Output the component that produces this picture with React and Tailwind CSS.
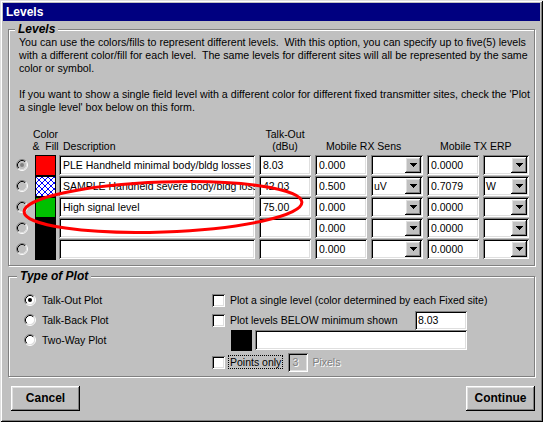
import React from "react";

const SUNKEN =
  "bg-white shadow-[inset_1px_1px_0_#808080,inset_-1px_-1px_0_#fff,inset_2px_2px_0_#000,inset_-2px_-2px_0_#dfdfdf]";
const SUNKEN_GRAY =
  "bg-[#c0c0c0] shadow-[inset_1px_1px_0_#808080,inset_-1px_-1px_0_#fff,inset_2px_2px_0_#000,inset_-2px_-2px_0_#dfdfdf]";
const RAISED =
  "bg-[#c0c0c0] shadow-[inset_-1px_-1px_0_#000,inset_1px_1px_0_#fff,inset_-2px_-2px_0_#808080,inset_2px_2px_0_#dfdfdf]";
const GROUP =
  "relative border border-[#808080] shadow-[inset_1px_1px_0_#fff,1px_1px_0_#fff]";

function Radio({ fill = "#fff", dot }) {
  return (
    <svg width="12" height="12" viewBox="0 0 12 12" className="shrink-0">
      <circle cx="6" cy="6" r="4.5" fill={fill} />
      <path d="M2.11 9.89A5.5 5.5 0 0 1 9.89 2.11" fill="none" stroke="#808080" />
      <path d="M9.89 2.11A5.5 5.5 0 0 1 2.11 9.89" fill="none" stroke="#fff" />
      <path d="M2.82 9.18A4.5 4.5 0 0 1 9.18 2.82" fill="none" stroke="#000" />
      <path d="M9.18 2.82A4.5 4.5 0 0 1 2.82 9.18" fill="none" stroke="#dfdfdf" />
      {dot && <circle cx="6" cy="6" r="2" fill={dot} />}
    </svg>
  );
}

function Arrow() {
  return (
    <svg width="7" height="4" viewBox="0 0 7 4" shapeRendering="crispEdges">
      <path d="M0 0h7v1h-1v1h-1v1h-1v1h-1v-1h-1v-1h-1v-1h-1z" fill="#000" />
    </svg>
  );
}

function Field({ className, text }) {
  return (
    <div className={`${SUNKEN} ${className} h-[20px] flex items-center pl-[4px] overflow-hidden whitespace-nowrap shrink-0`}>
      {text}
    </div>
  );
}

function Combo({ className, text }) {
  return (
    <div className={`${SUNKEN} ${className} h-[20px] flex p-[2px] shrink-0`}>
      <div className="flex-1 flex items-center pl-[1px]">{text}</div>
      <div className={`${RAISED} w-[16px] h-[16px] flex items-center justify-center`}>
        <Arrow />
      </div>
    </div>
  );
}

function Swatch({ kind }) {
  if (kind === "hatch") {
    return (
      <div className="w-[21px] h-[21px] border border-black bg-white shrink-0 overflow-hidden">
        <svg width="19" height="19" viewBox="0 0 19 19">
          <defs>
            <pattern id="hx" width="6" height="6" patternUnits="userSpaceOnUse">
              <path d="M0 0L6 6M6 0L0 6" stroke="#0000ff" strokeWidth="1" />
            </pattern>
          </defs>
          <rect width="19" height="19" fill="url(#hx)" />
        </svg>
      </div>
    );
  }
  const bg =
    kind === "red" ? "bg-[#ff0000]" : kind === "green" ? "bg-[#00c000]" : "bg-black";
  return <div className={`w-[21px] h-[21px] border border-black shrink-0 ${bg}`} />;
}

function Check() {
  return <div className={`${SUNKEN} w-[13px] h-[13px] shrink-0`} />;
}

const rows = [
  { sel: true, sw: "red", desc: "PLE Handheld minimal body/bldg losses", talk: "8.03", rx: "0.000", rxu: "", tx: "0.0000", txu: "" },
  { sw: "hatch", desc: "SAMPLE Handheld severe body/bldg losses", talk: "42.03", rx: "0.500", rxu: "uV", tx: "0.7079", txu: "W" },
  { sw: "green", desc: "High signal level", talk: "75.00", rx: "0.000", rxu: "", tx: "0.0000", txu: "" },
  { sw: "black", desc: "", talk: "", rx: "0.000", rxu: "", tx: "0.0000", txu: "" },
  { sw: "black", desc: "", talk: "", rx: "0.000", rxu: "", tx: "0.0000", txu: "" },
];

const lines = [
  "You can use the colors/fills to represent different levels.  With this option, you can specify up to five(5) levels",
  "with a different color/fill for each level.  The same levels for different sites will all be represented by the same",
  "color or symbol.",
  "",
  "If you want to show a single field level with a different color for different fixed transmitter sites, check the 'Plot",
  "a single level' box below on this form.",
];

export default function App() {
  return (
    <div className="relative w-[543px] h-[422px] bg-[#c0c0c0] p-[3px] text-[10.5px] leading-[13px] text-black font-['Liberation_Sans',Arial,sans-serif] shadow-[inset_1px_1px_0_#dfdfdf,inset_-1px_-1px_0_#000,inset_2px_2px_0_#fff,inset_-2px_-2px_0_#808080] overflow-hidden">
      <div className="h-[18px] bg-[#000080] text-white font-bold text-[12px] flex items-center pl-[3px]">
        Levels
      </div>

      <div className="px-[5px] pt-[8px]">
        {/* Levels group */}
        <div className={`${GROUP} w-[527px] h-[237px] pl-[7px] pt-[6px]`}>
          <span className="absolute left-[6px] top-[-8px] px-[3px] bg-[#c0c0c0] font-bold italic text-[12px] leading-[14px]">
            Levels
          </span>
          <div className="pl-[3px] text-[10.65px]">
            {lines.map((l, i) => (
              <div key={i} className="h-[13px] whitespace-pre">
                {l}
              </div>
            ))}
          </div>

          {/* header */}
          <div className="mt-[14px] flex items-end leading-[12px] whitespace-nowrap">
            <div className="w-[19px] shrink-0" />
            <div className="w-[21px] shrink-0 flex flex-col items-center">
              <span>Color</span>
              <span>&amp;&nbsp;&nbsp;Fill</span>
            </div>
            <div className="w-[196px] ml-[3px] pl-[4px] shrink-0">Description</div>
            <div className="w-[52px] ml-[4px] shrink-0 flex flex-col items-center">
              <span>Talk-Out</span>
              <span>(dBu)</span>
            </div>
            <div className="w-[108px] ml-[4px] pl-[11px] shrink-0">Mobile RX Sens</div>
            <div className="w-[101px] ml-[4px] pl-[13px] shrink-0">Mobile TX ERP</div>
          </div>

          {/* rows */}
          <div className="mt-[3px] flex flex-col">
            {rows.map((r, i) => (
              <div key={i} className="h-[21px] flex items-start">
                <div className="w-[12px] h-[20px] flex items-center shrink-0">
                  <Radio fill="#c0c0c0" dot={r.sel ? "#808080" : null} />
                </div>
                <div className="ml-[7px]">
                  <Swatch kind={r.sw} />
                </div>
                <Field className="w-[196px] ml-[3px]" text={r.desc} />
                <Field className="w-[52px] ml-[4px]" text={r.talk} />
                <Field className="w-[52px] ml-[4px]" text={r.rx} />
                <Combo className="w-[52px] ml-[4px]" text={r.rxu} />
                <Field className="w-[52px] ml-[4px]" text={r.tx} />
                <Combo className="w-[46px] ml-[4px]" text={r.txu} />
              </div>
            ))}
          </div>
        </div>

        {/* Type of Plot group */}
        <div className={`${GROUP} mt-[10px] w-[527px] h-[101px] flex pt-[13px]`}>
          <span className="absolute left-[8px] top-[-8px] px-[3px] bg-[#c0c0c0] font-bold italic text-[12px] leading-[14px]">
            Type of Plot
          </span>
          <div className="w-[203px] pl-[15px] flex flex-col shrink-0">
            {[
              ["Talk-Out Plot", true],
              ["Talk-Back Plot", false],
              ["Two-Way Plot", false],
            ].map(([t, s]) => (
              <div key={t} className="h-[20px] flex items-center gap-[6px]">
                <Radio dot={s ? "#000" : null} />
                <span>{t}</span>
              </div>
            ))}
          </div>
          <div className="flex flex-col whitespace-nowrap">
            <div className="h-[20px] flex items-center">
              <Check />
              <span className="ml-[5px]">Plot a single level (color determined by each Fixed site)</span>
            </div>
            <div className="h-[20px] flex items-center">
              <Check />
              <span className="ml-[5px] w-[185px]">Plot levels BELOW minimum shown</span>
              <div className={`${SUNKEN} w-[52px] h-[19px] flex items-center pl-[3px] self-end`}>8.03</div>
            </div>
            <div className="h-[21px] flex items-start pl-[19px]">
              <div className="w-[21px] h-[21px] bg-black shrink-0" />
              <div className={`${SUNKEN} w-[212px] h-[20px] ml-[3px]`} />
            </div>
            <div className="mt-[1px] h-[20px] flex items-center">
              <Check />
              <span className="ml-[3px] px-[1px] border border-dotted border-black leading-[12px]">
                Points only
              </span>
              <div className={`${SUNKEN_GRAY} ml-[5px] w-[20px] h-[19px] flex items-center pl-[4px] text-[#808080] [text-shadow:1px_1px_0_#fff]`}>
                3
              </div>
              <span className="ml-[4px] text-[#808080] [text-shadow:1px_1px_0_#fff]">Pixels</span>
            </div>
          </div>
        </div>

        {/* buttons */}
        <div className="mt-[9px] flex justify-between">
          <button className={`${RAISED} ml-[3px] w-[69px] h-[25px] font-bold text-[12px]`}>Cancel</button>
          <button className={`${RAISED} w-[69px] h-[25px] font-bold text-[12px]`}>Continue</button>
        </div>
      </div>

      <svg className="absolute left-0 top-0 pointer-events-none" width="543" height="422" viewBox="0 0 543 422">
        <ellipse
          cx="163"
          cy="207"
          rx="139"
          ry="25"
          fill="none"
          stroke="#ff0000"
          strokeWidth="3"
          transform="rotate(-2 163 207)"
        />
      </svg>
    </div>
  );
}
